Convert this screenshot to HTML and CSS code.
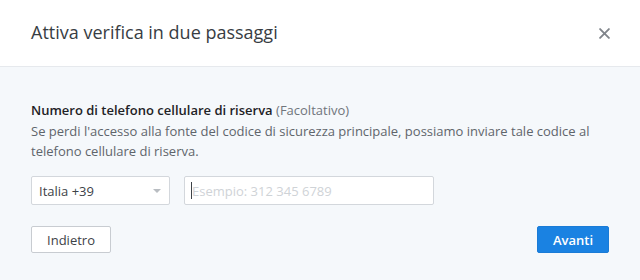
FILE: index.html
```html
<!DOCTYPE html>
<html lang="it">
<head>
<meta charset="utf-8">
<link rel="stylesheet" href="styles.css">
</head>
<body>
<div class="modal">
  <header class="head">
    <h1 class="title">Attiva verifica in due passaggi</h1>
    <button class="close" aria-label="Chiudi">
      <svg width="11" height="11" viewBox="0 0 10 10"><path d="M1 1L9 9M9 1L1 9" stroke="#80858b" stroke-width="1.7" stroke-linecap="round"/></svg>
    </button>
  </header>
  <main class="body">
    <p class="label"><strong>Numero di telefono cellulare di riserva</strong> <span class="opt">(Facoltativo)</span></p>
    <p class="desc">Se perdi l'accesso alla fonte del codice di sicurezza principale, possiamo inviare tale codice al telefono cellulare di riserva.</p>
    <div class="fields">
      <div class="select"><span>Italia +39</span><span class="caret"></span></div>
      <div class="input"><span class="cursor"></span><span class="ph">Esempio: 312 345 6789</span></div>
    </div>
    <div class="actions">
      <button class="btn">Indietro</button>
      <button class="btn primary">Avanti</button>
    </div>
  </main>
</div>
</body>
</html>
```
FILE: styles.css
```css
* { box-sizing: border-box; }
html, body { margin: 0; padding: 0; }
body {
  font-family: "Open Sans", "Noto Sans", sans-serif;
  background: #f5f8fb;
  width: 640px;
  height: 280px;
  overflow: hidden;
}
.head {
  height: 67px;
  background: #fff;
  border-bottom: 1px solid #e6e9ed;
  display: flex;
  align-items: center;
  justify-content: space-between;
  padding: 0 29px 0 31px;
}
.title {
  margin: 0;
  font-size: 18px;
  font-weight: 400;
  color: #383d43;
  padding-bottom: 2px;
}
.close {
  border: 0;
  background: none;
  padding: 0;
  width: 14px;
  height: 14px;
  display: flex;
  align-items: center;
  justify-content: center;
}
.body {
  padding: 33px 31px 0 31px;
}
.label {
  margin: 0;
  font-size: 13px;
  line-height: 20px;
  color: #1e2226;
}
.label strong { font-weight: 600; }
.opt { color: #70757b; }
.desc {
  margin: 1px 0 0;
  font-size: 13px;
  line-height: 20px;
  color: #5f656b;
  width: 570px;
}
.fields {
  display: flex;
  gap: 14px;
  margin-top: 15px;
}
.select, .input {
  height: 29px;
  background: #fff;
  border: 1px solid #d3d7dc;
  border-radius: 2px;
  display: flex;
  align-items: center;
  font-size: 13px;
}
.select {
  width: 139px;
  padding: 0 8px 0 7px;
  justify-content: space-between;
  color: #3d4248;
}
.caret {
  width: 0; height: 0;
  border-left: 4px solid transparent;
  border-right: 4px solid transparent;
  border-top: 4px solid #b9bdc2;
  margin-top: 1px;
}
.input {
  width: 250px;
  padding: 0 6px;
}
.cursor {
  width: 1px;
  height: 17px;
  background: #3d4248;
}
.ph { color: #cfd3d7; }
.actions {
  display: flex;
  justify-content: space-between;
  margin-top: 21px;
}
.btn {
  font-family: inherit;
  font-size: 13px;
  height: 27px;
  padding: 0;
  border: 1px solid #c8ccd1;
  border-radius: 2px;
  background: #fff;
  color: #3d4248;
  width: 80px;
}
.btn.primary {
  background: #1a82e2;
  border-color: #1a7bd6;
  color: #fff;
  font-weight: 600;
  width: 72px;
}
```
